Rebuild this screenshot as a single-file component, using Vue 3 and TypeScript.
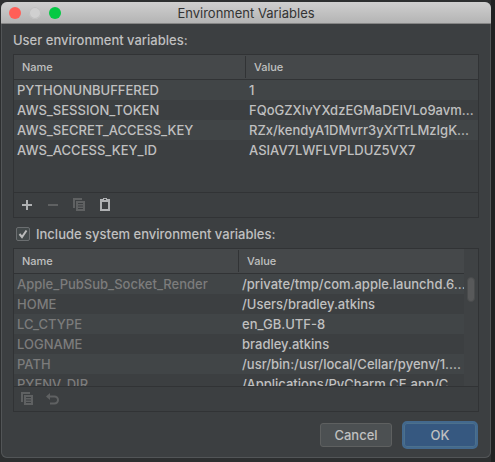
<script setup lang="ts">
import { ref } from 'vue'

interface EnvVar {
  name: string
  value: string
}

const userVars: EnvVar[] = [
  { name: 'PYTHONUNBUFFERED', value: '1' },
  { name: 'AWS_SESSION_TOKEN', value: 'FQoGZXIvYXdzEGMaDEIVLo9avm...' },
  { name: 'AWS_SECRET_ACCESS_KEY', value: 'RZx/kendyA1DMvrr3yXrTrLMzIgK...' },
  { name: 'AWS_ACCESS_KEY_ID', value: 'ASIAV7LWFLVPLDUZ5VX7' },
]

const systemVars: EnvVar[] = [
  { name: 'Apple_PubSub_Socket_Render', value: '/private/tmp/com.apple.launchd.6...' },
  { name: 'HOME', value: '/Users/bradley.atkins' },
  { name: 'LC_CTYPE', value: 'en_GB.UTF-8' },
  { name: 'LOGNAME', value: 'bradley.atkins' },
  { name: 'PATH', value: '/usr/bin:/usr/local/Cellar/pyenv/1....' },
  { name: 'PYENV_DIR', value: '/Applications/PyCharm CE.app/C...' },
]

const includeSystem = ref(true)
</script>

<template>
  <div class="desktop">
    <main class="dialog">
      <header class="titlebar">
        <div class="lights">
          <button class="light red" type="button" aria-label="Close"></button>
          <button class="light gray" type="button" aria-label="Minimize" disabled></button>
          <button class="light green" type="button" aria-label="Zoom"></button>
        </div>
        <h1 class="title">Environment Variables</h1>
      </header>

      <div class="content">
        <h2 id="user-label" class="caption">User environment variables:</h2>
        <section class="panel">
          <div class="viewport">
            <table aria-labelledby="user-label">
              <thead>
                <tr>
                  <th><span class="head divided">Name</span></th>
                  <th><span class="head">Value</span></th>
                </tr>
              </thead>
              <tbody>
                <tr v-for="v in userVars" :key="v.name">
                  <td>{{ v.name }}</td>
                  <td>{{ v.value }}</td>
                </tr>
              </tbody>
            </table>
          </div>
          <div class="toolbar">
            <button class="tool" type="button" aria-label="Add">
              <svg viewBox="0 0 16 16"><path d="M7 3h2v4h4v2H9v4H7V9H3V7h4z" /></svg>
            </button>
            <button class="tool" type="button" aria-label="Remove" disabled>
              <svg viewBox="0 0 16 16"><path d="M3 7h10v2H3z" /></svg>
            </button>
            <button class="tool" type="button" aria-label="Copy" disabled>
              <svg viewBox="0 0 16 16">
                <path d="M2 1h9v2H4v8H2z" />
                <path fill-rule="evenodd" d="M5 4h9v10H5zM7 6v1h5V6zM7 8.500v1h5v-1zM7 11v1h5v-1z" />
              </svg>
            </button>
            <button class="tool" type="button" aria-label="Paste">
              <svg viewBox="0 0 16 16">
                <path fill-rule="evenodd" d="M3 2h3V1h4v1h3v12H3zM5 5v7h6V5zM7 2v1h2V2z" />
              </svg>
            </button>
          </div>
        </section>

        <label class="include">
          <span class="tick">
            <input v-model="includeSystem" type="checkbox" />
            <svg v-if="includeSystem" viewBox="0 0 14 14"><path d="M3.500 7l2.500 3L10.500 3.500" /></svg>
          </span>
          <span id="system-label">Include system environment variables:</span>
        </label>
        <section class="panel">
          <div class="viewport">
            <table class="system" aria-labelledby="system-label">
              <thead>
                <tr>
                  <th><span class="head divided">Name</span></th>
                  <th><span class="head">Value</span></th>
                </tr>
              </thead>
              <tbody>
                <tr v-for="v in systemVars" :key="v.name">
                  <td>{{ v.name }}</td>
                  <td>{{ v.value }}</td>
                </tr>
              </tbody>
            </table>
            <div class="track"><div class="thumb"></div></div>
          </div>
          <div class="toolbar">
            <button class="tool" type="button" aria-label="Copy" disabled>
              <svg viewBox="0 0 16 16">
                <path d="M2 1h9v2H4v8H2z" />
                <path fill-rule="evenodd" d="M5 4h9v10H5zM7 6v1h5V6zM7 8.500v1h5v-1zM7 11v1h5v-1z" />
              </svg>
            </button>
            <button class="tool" type="button" aria-label="Revert" disabled>
              <svg viewBox="0 0 16 16">
                <path d="M1 5.500L5 2v7z" />
                <path class="stroke" d="M4 5.500h5.500a3.500 3.500 0 0 1 0 7H5" />
              </svg>
            </button>
          </div>
        </section>

        <footer class="actions">
          <button class="action" type="button">Cancel</button>
          <button class="action primary" type="button">OK</button>
        </footer>
      </div>
    </main>
  </div>
</template>

<style>
body {
  background: #2b2c2d;
}
</style>

<style scoped>
.desktop {
  box-sizing: border-box;
  min-height: 100vh;
  padding: 2px 4px 4px 1px;
  background: linear-gradient(to left, #202122 4px, #2d2f30 4px);
  font-family: Inter, "Liberation Sans", sans-serif;
  font-size: 13px;
  font-weight: 500;
  line-height: 20px;
  color: #c0c0c0;
}

.dialog {
  border-radius: 6px;
  background: #3c3f41;
  box-shadow: inset 0 0 0 1px #525557;
  overflow: hidden;
}

.titlebar {
  display: grid;
  grid-template-columns: 1fr auto 1fr;
  align-items: center;
  height: 22px;
  padding: 0 8px;
  background: linear-gradient(#cfcfcf, #b4b4b4);
  border-bottom: 1px solid #858585;
  box-sizing: border-box;
}

.lights {
  display: flex;
  gap: 8px;
}

.light {
  width: 12px;
  height: 12px;
  padding: 0;
  border: 0;
  border-radius: 50%;
}

.red {
  background: #ff5f57;
}

.gray {
  background: #d0d0d0;
  box-shadow: inset 0 0 0 1px #c0c0c0;
}

.green {
  background: #05c944;
}

.title {
  margin: 0;
  font-size: 13px;
  font-weight: 400;
  color: #333333;
}

.content {
  padding: 6px 12px 9px;
}

.caption {
  height: 20px;
  margin: 0 0 4px;
  font-size: 13px;
  font-weight: 500;
}

.panel {
  border: 1px solid #313335;
}

.viewport {
  display: flex;
  height: 137px;
  overflow: hidden;
}

table {
  flex: 1;
  align-self: flex-start;
  width: 100%;
  table-layout: fixed;
  border-spacing: 0;
}

th {
  height: 24px;
  padding: 0;
  border-bottom: 1px solid #313335;
  background: #45484a;
  text-align: left;
}

.head {
  display: block;
  padding-left: 8px;
  font-size: 11px;
  font-weight: 500;
  line-height: 22px;
}

.divided {
  border-right: 1px solid #313335;
}

td {
  height: 20px;
  padding: 0 0 0 3px;
  white-space: nowrap;
}

tbody tr:nth-child(odd) {
  background: #414547;
}

.system td:first-child {
  color: #7c7c7c;
}

.track {
  flex: none;
  box-sizing: border-box;
  width: 14px;
  padding: 28px 3px 0;
  background: #3f4244;
}

.thumb {
  box-sizing: border-box;
  height: 25px;
  border: 1px solid #4a4c4d;
  border-radius: 4px;
  background: #58595a;
}

.toolbar {
  display: flex;
  align-items: center;
  gap: 10px;
  height: 24px;
  padding-left: 5px;
  border-top: 1px solid #313335;
}

.tool {
  width: 16px;
  height: 16px;
  padding: 0;
  border: 0;
  background: none;
  color: #afb1b3;
}

.tool:disabled {
  color: #5f6162;
}

.tool svg {
  display: block;
  fill: currentColor;
}

.tool .stroke {
  fill: none;
  stroke: currentColor;
  stroke-width: 2;
}

.include {
  display: flex;
  align-items: center;
  gap: 6px;
  height: 20px;
  margin: 6px 0 4px 3px;
}

.tick {
  position: relative;
  width: 14px;
  height: 14px;
}

.tick input {
  appearance: none;
  display: block;
  box-sizing: border-box;
  width: 14px;
  height: 14px;
  margin: 0;
  border: 1px solid #6b6e70;
  border-radius: 2px;
  background: #43494a;
}

.tick svg {
  position: absolute;
  inset: 0;
  fill: none;
  stroke: #bbbbbb;
  stroke-width: 2;
  pointer-events: none;
}

.actions {
  display: flex;
  justify-content: flex-end;
  align-items: center;
  gap: 10px;
  padding: 9px 1px 0 0;
}

.action {
  box-sizing: border-box;
  width: 72px;
  height: 24px;
  padding: 0;
  border: 1px solid #5e6060;
  border-radius: 3px;
  background: #4c5052;
  color: #c0c0c0;
  font: inherit;
  line-height: 20px;
}

.primary {
  width: 76px;
  height: 28px;
  border: 2px solid #43698e;
  border-radius: 5px;
  background: #365880;
  box-shadow: inset 0 0 0 1px #4c708c;
}
</style>
